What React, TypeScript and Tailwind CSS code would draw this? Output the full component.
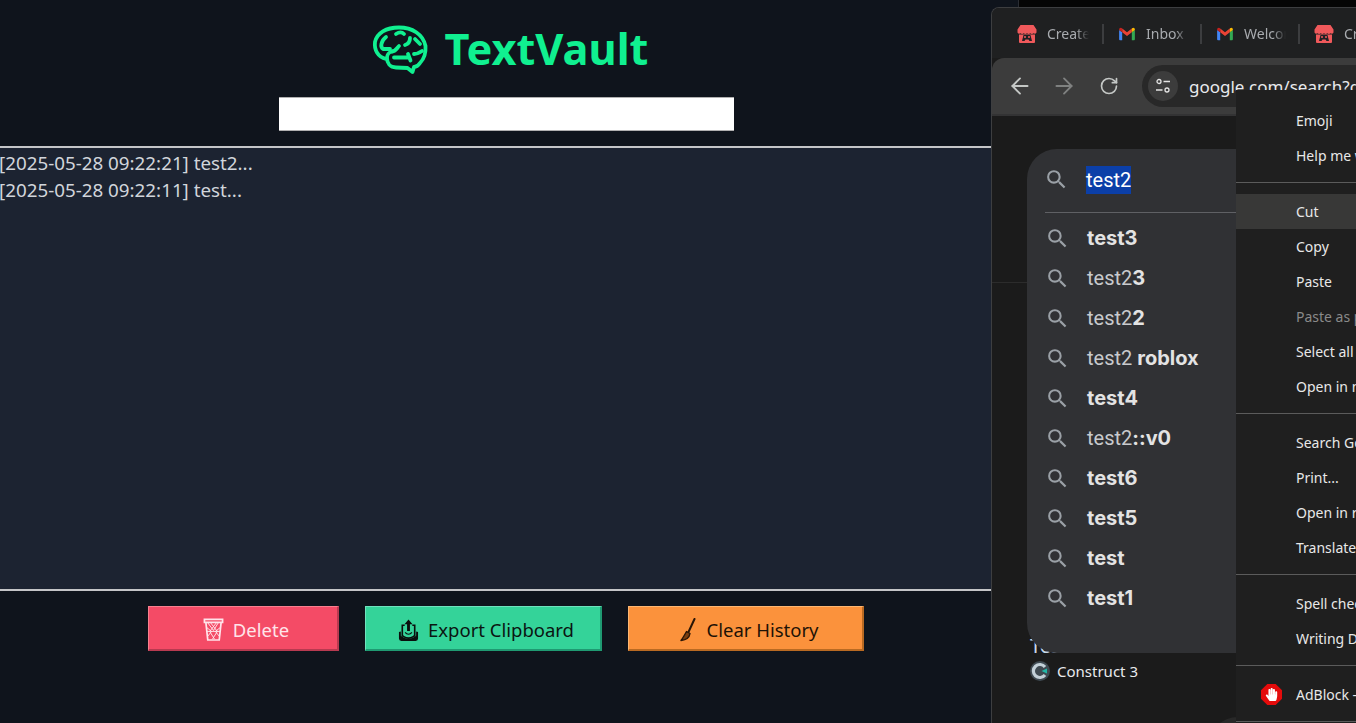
import type { ReactNode } from "react";
import { ArrowLeft, ArrowRight, RotateCw } from "lucide-react";
import { FaHandPaper } from "react-icons/fa";
import { MdSearch } from "react-icons/md";

const sans = "font-['Noto_Sans','Open_Sans',sans-serif]";

function BrainLogo() {
  return (
    <svg viewBox="0 0 70 60" className="h-[60px] w-[70px] shrink-0" fill="none" stroke="#10f090" strokeWidth="3.800" strokeLinecap="round" strokeLinejoin="round">
      <path d="M20 40C12 38 8 31 9 23 11 14 20 8.500 33 8.500 46 8.500 57 15 59.500 27 60 34 58 40 54 44 52 47 50 48 48 48L46.500 53 41.500 49 30 48.500C24 48.500 21 44 21 39 21 36 23 33 26 32.500" />
      <path d="M20 18C15 22 14 28 17 30L24 30" />
      <path d="M30 15C33 13 36 13 38 15" />
      <path d="M49 20 54 25" />
      <path d="M26 32.500C30 32 31 29 33 27M39 26C42 25 44 22 44 19" />
      <path d="M28 38.500H42M42 35 44.500 41.500M48 35C50 35 53 34 56 32" />
    </svg>
  );
}

function TrashIcon() {
  return (
    <svg viewBox="0 0 22 26" className="h-[25px] w-[21px] shrink-0" fill="none" stroke="#ffe4ea" strokeWidth="1.800">
      <path d="M1.500 2.500h19v3h-19zM3 5.500 5 24h12l2-18.500" />
      <path d="M5 6l6 8 5-8M8 6l7 9-5 8M14 6 7 15l5 8M4 11l5 4-4 5M18 11l-5 4 4 5M4 15h14" strokeWidth="1" />
    </svg>
  );
}

function ExportIcon() {
  return (
    <svg viewBox="0 0 22 24" className="h-[24px] w-[21px] shrink-0" fill="none">
      <path d="M1 14v7a2.500 2.500 0 0 0 2.500 2.500h15A2.500 2.500 0 0 0 21 21v-7l-2-.5V18c-2 1-3 3-8 3s-6-2-8-3v-4.500z" fill="#0a0f0d" />
      <path d="M7 7H4.500v11c2 1 3 2.500 6.500 2.500s4.500-1.500 6.500-2.500V7H15" stroke="#0a0f0d" strokeWidth="1.700" />
      <path d="M11 1 6.800 6H9.500v7h3V6h2.700z" fill="#0a0f0d" />
      <path d="M7.500 14.500c1 1.500 2 2 3.500 2s2.500-.5 3.500-2" stroke="#0a0f0d" strokeWidth="1.200" />
    </svg>
  );
}

function BroomIcon() {
  return (
    <svg viewBox="0 0 18 24" className="h-[24px] w-[18px] shrink-0" fill="none">
      <path d="M15.500 1 9.500 14" stroke="#2a1606" strokeWidth="2" strokeLinecap="round" />
      <path d="M7.500 13.500 11 15.500c-.5 3.500-3 6.500-9 7 2-2.500 3.500-5.500 5.500-9z" fill="#7a3f10" stroke="#2a1606" strokeWidth="1.400" strokeLinejoin="round" />
    </svg>
  );
}

function ItchIcon() {
  return (
    <svg viewBox="0 0 20 20" className="h-[20px] w-[20px] shrink-0">
      <path d="M3.500 1h13l3 4.500v3a2.200 2.200 0 0 1-3 .8 2.600 2.600 0 0 1-3.200 0 2.600 2.600 0 0 1-3.300 0 2.600 2.600 0 0 1-3.300 0 2.600 2.600 0 0 1-3.200 0 2.200 2.200 0 0 1-3-.8v-3z" fill="#f0595b" />
      <path d="M2 10.500h16V18a1 1 0 0 1-1 1H3a1 1 0 0 1-1-1z" fill="#f0595b" />
      <path d="M6.500 11h7l1.500 6h-2.500L11.500 15.500h-3L7.500 17H5z" fill="#202124" />
      <circle cx="8" cy="13" r="1" fill="#f0595b" />
      <circle cx="12" cy="13" r="1" fill="#f0595b" />
    </svg>
  );
}

function GmailIcon() {
  return (
    <svg viewBox="0 0 20 16" className="h-[14px] w-[18px] shrink-0">
      <path d="M1 15V3.500l3.500 2.600V15H2a1 1 0 0 1-1-1z" fill="#4285f4" />
      <path d="M15.500 15V6.100L19 3.500V14a1 1 0 0 1-1 1z" fill="#34a853" />
      <path d="M4.500 6.100V1.800L10 6l5.500-4.200v4.300L10 10.200z" fill="#ea4335" />
      <path d="M1 3.500V3c0-2 2.300-3 3.500-1.200v4.300z" fill="#c5221f" />
      <path d="M15.500 1.800C17 0 19 1 19 3v.5l-3.500 2.600z" fill="#fbbc04" />
    </svg>
  );
}

function ConstructLogo() {
  return (
    <svg viewBox="0 0 20 20" className="h-[20px] w-[20px] shrink-0">
      <circle cx="10" cy="10" r="10" fill="#3f4a52" />
      <path d="M15 6a6.500 6.500 0 1 0 0 8" fill="none" stroke="#c3d0d8" strokeWidth="3.200" />
      <path d="M11.500 10 17 7.500v5z" fill="#22b8a8" />
    </svg>
  );
}

function SiteInfoIcon() {
  return (
    <svg viewBox="0 0 16 16" className="h-[16px] w-[16px]" fill="none" stroke="#e3e3e3" strokeWidth="1.300">
      <circle cx="4" cy="3.500" r="2" />
      <path d="M8.500 3.500h6.500M1 12h6.500" />
      <circle cx="12" cy="12" r="2" />
    </svg>
  );
}

function Tab({ icon, label, first }: { icon: ReactNode; label: string; first?: boolean }) {
  return (
    <div className={`flex shrink-0 items-center gap-[10px] ${first ? "w-[110px] pl-[25px]" : "w-[96px] pl-[14px]"}`}>
      {icon}
      <span className="w-[42px] overflow-hidden whitespace-nowrap text-[14px] text-[#a8abaf] [mask-image:linear-gradient(to_right,black_70%,transparent)]">
        {label}
      </span>
    </div>
  );
}

function TabSeparator() {
  return <div className="h-[20px] w-[2px] shrink-0 bg-[#3c3d3f]" />;
}

const suggestions: { plain?: string; bold?: string }[] = [
  { bold: "test3" },
  { plain: "test2", bold: "3" },
  { plain: "test2", bold: "2" },
  { plain: "test2 ", bold: "roblox" },
  { bold: "test4" },
  { plain: "test2", bold: "::v0" },
  { bold: "test6" },
  { bold: "test5" },
  { bold: "test" },
  { bold: "test1" },
];

function Divider() {
  return <div className="mb-[11px] mt-[9px] h-px shrink-0 bg-[#5b5b5b]" />;
}

function MenuItem({ label, active, muted }: { label: string; active?: boolean; muted?: boolean }) {
  return (
    <div className={`flex h-[35px] shrink-0 items-center whitespace-nowrap pl-[60px] text-[14px] ${active ? "bg-[#383837]" : ""} ${muted ? "text-[#8a8a8a]" : "text-[#e8e8e8]"}`}>
      {label}
    </div>
  );
}

export default function App() {
  return (
    <div className={`relative flex h-[723px] w-[1356px] overflow-hidden bg-[#050505] ${sans}`}>
      {/* app */}
      <div className="flex h-full w-[1019px] shrink-0 flex-col border-r border-[#2a2d33] bg-[#0f141c]">
        <div className="flex h-[146px] flex-col items-center">
          <div className="mr-[4px] flex h-[97px] items-center gap-[9px] pt-[1px]">
            <BrainLogo />
            <span className="text-[43.300px] font-bold leading-none text-[#10f090]">TextVault</span>
          </div>
          <div className="mr-[6px] h-[34px] w-[455px] border-y border-[#b0b0b0] bg-white" />
        </div>
        <div className="flex h-[445px] flex-col border-y-2 border-[#c4c5c7] bg-[#1c2331] pt-[2px] text-[18.800px] leading-[27px] text-[#d1d5db]">
          <div className="-ml-[1px] whitespace-nowrap">[2025-05-28 09:22:21] test2...</div>
          <div className="-ml-[1px] whitespace-nowrap">[2025-05-28 09:22:11] test...</div>
        </div>
        <div className="flex items-start gap-[26px] pl-[148px] pt-[15px] text-[18.500px]">
          <button className="flex h-[45px] w-[191px] items-center justify-center gap-[9px] border border-b-2 border-r-2 border-[#f8808f] border-b-[#b83a50] border-r-[#b83a50] bg-[#f44b66] pl-[6px] pt-[3px] text-[#ffe4ea]">
            <TrashIcon />
            Delete
          </button>
          <button className="flex h-[45px] w-[237px] items-center justify-center gap-[9px] border border-b-2 border-r-2 border-[#6fe3bd] border-b-[#1f9a72] border-r-[#1f9a72] bg-[#34d399] pl-[6px] pt-[3px] text-[#0b1512]">
            <ExportIcon />
            Export Clipboard
          </button>
          <button className="flex h-[45px] w-[236px] items-center justify-center gap-[9px] border border-b-2 border-r-2 border-[#fdb772] border-b-[#b96a22] border-r-[#b96a22] bg-[#fb923c] pl-[7px] pt-[3px] text-[#1e1206]">
            <BroomIcon />
            Clear History
          </button>
        </div>
      </div>

      {/* browser window */}
      <div className="absolute left-[991px] top-[7px] flex h-[716px] w-[365px] flex-col overflow-hidden rounded-tl-lg border-l border-t border-[#3d3e40] bg-[#1b1b1b]">
        <div className="flex h-[50px] shrink-0 items-center bg-[#1f2021] pt-[1px]">
          <Tab first icon={<ItchIcon />} label="Create" />
          <TabSeparator />
          <Tab icon={<GmailIcon />} label="Inbox" />
          <TabSeparator />
          <Tab icon={<GmailIcon />} label="Welcome" />
          <TabSeparator />
          <Tab icon={<ItchIcon />} label="Create" />
        </div>
        <div className="flex h-[58px] shrink-0 items-center rounded-tl-xl border-b-2 border-[#333334] bg-[#3c3c3c] pl-[15px]">
          <ArrowLeft size={26} strokeWidth={1.700} className="shrink-0 text-[#c4c7c5]" />
          <ArrowRight size={26} strokeWidth={1.700} className="ml-[18px] shrink-0 text-[#7f8180]" />
          <RotateCw size={20} strokeWidth={2} className="ml-[22px] shrink-0 text-[#c4c7c5]" />
          <div className="ml-[23px] flex h-[42px] min-w-0 flex-1 items-center overflow-hidden rounded-l-full bg-[#282828] pl-[6px]">
            <div className="flex h-[30px] w-[30px] shrink-0 items-center justify-center rounded-full bg-[#3c3c3c]">
              <SiteInfoIcon />
            </div>
            <span className="ml-[11px] whitespace-nowrap pt-[1px] text-[17px] text-[#e8eaed]">google.com/search?q=test2</span>
          </div>
        </div>
        <div className="flex min-h-0 flex-1 flex-col">
          <div className="h-[167px] shrink-0 border-b border-[#2c2c2c]" />
          <div className="mt-[351px] pl-[38px] text-[20px] leading-[24px] text-[#c8d8e8]">Test</div>
          <div className="mt-[2px] flex items-center gap-[7px] pl-[38px] text-[15px] text-[#e8eaed]">
            <ConstructLogo />
            Construct 3
          </div>
          <div className="ml-[216px] mt-[34px] h-[60px] w-[60px] shrink-0 rounded-full bg-[#282828]" />
        </div>
      </div>

      {/* search suggestions */}
      <div className="absolute left-[1027px] top-[149px] h-[504px] w-[240px] rounded-[30px] bg-[#303134]">
        <div className="ml-[18px] flex h-[64px] items-center border-b border-[#5f6064] pb-[2px]">
          <MdSearch size={25} className="-ml-[1px] text-[#9aa0a6]" />
          <span className="ml-[17px] bg-[#0b3fa8] font-['Roboto',sans-serif] text-[20px] leading-[28px] text-white">test2</span>
        </div>
        <div className="mt-[5px] flex flex-col pl-[18px] font-['Roboto',sans-serif] text-[20px] text-[#e3e3e3]">
          {suggestions.map((s, i) => (
            <div key={i} className="flex h-[40px] items-center whitespace-pre">
              <MdSearch size={25} className="mr-[17px] shrink-0 text-[#9aa0a6]" />
              {s.plain && <span className="text-[#c8cacd]">{s.plain}</span>}
              {s.bold && <span className="font-['Inter',sans-serif] font-bold">{s.bold}</span>}
            </div>
          ))}
        </div>
      </div>

      {/* context menu */}
      <div className="absolute left-[1236px] top-[90px] flex h-[633px] w-[120px] flex-col overflow-hidden bg-[#1f1f1f] pt-[13px]">
        <MenuItem label="Emoji" />
        <MenuItem label="Help me write" />
        <Divider />
        <MenuItem label="Cut" active />
        <MenuItem label="Copy" />
        <MenuItem label="Paste" />
        <MenuItem label="Paste as plain text" muted />
        <MenuItem label="Select all" />
        <MenuItem label="Open in new tab" />
        <Divider />
        <MenuItem label="Search Google for" />
        <MenuItem label="Print..." />
        <MenuItem label="Open in reading mode" />
        <MenuItem label="Translate to English" />
        <Divider />
        <MenuItem label="Spell check" />
        <MenuItem label="Writing Direction" />
        <Divider />
        <div className="relative shrink-0">
          <MenuItem label="AdBlock - block ads" />
          <div className="absolute left-[25px] top-[7px] flex h-[21px] w-[21px] items-center justify-center bg-[#e40b0b] [clip-path:polygon(30%_0,70%_0,100%_30%,100%_70%,70%_100%,30%_100%,0_70%,0_30%)]">
            <FaHandPaper size={13} className="text-white" />
          </div>
        </div>
        <Divider />
      </div>
    </div>
  );
}
